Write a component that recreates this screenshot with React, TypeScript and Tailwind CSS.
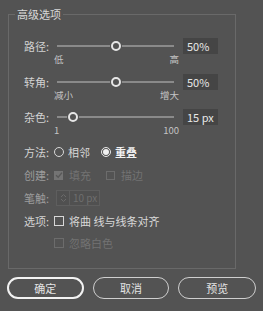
const FONT = "font-['Noto_Sans_CJK_SC','Noto_Sans',sans-serif]";

function Slider({ pct }: { pct: number }) {
  return (
    <div className="relative w-[117px] h-4 flex items-center">
      <div className="w-full h-[2px] bg-[#8a8a8a]" />
      <div
        className="absolute top-1/2 w-[12px] h-[12px] -translate-x-1/2 -translate-y-1/2 rounded-full bg-[#535353] flex items-center justify-center"
        style={{ left: `${pct}%` }}
      >
        <div className="w-[10px] h-[10px] rounded-full border-2 border-[#e6e6e6]" />
      </div>
    </div>
  );
}

function SliderBlock({ label, pct, value, lo, hi, className = '' }: { label: string; pct: number; value: string; lo: string; hi: string; className?: string }) {
  return (
    <div className={className}>
      <div className="flex items-center h-4">
        <span className="w-[33px] text-[11px] leading-4 text-[#d2d2d2]">{label}</span>
        <Slider pct={pct} />
        <div className="ml-[9px] w-[35px] h-4 bg-[#454545] text-[11px] leading-4 text-[#e8e8e8] pl-[4px]">{value}</div>
      </div>
      <div className="ml-[30px] w-[125px] h-[10px] flex justify-between text-[9.5px] leading-[10px] text-[#c4c4c4]">
        <span>{lo}</span>
        <span>{hi}</span>
      </div>
    </div>
  );
}

function CheckMark({ color }: { color: string }) {
  return (
    <svg width="8" height="8" viewBox="0 0 8 8">
      <path d="M1 4.2 L3.2 6.2 L7 1.6" fill="none" stroke={color} strokeWidth="1.4" />
    </svg>
  );
}

export default function App() {
  return (
    <div className={`w-[263px] h-[311px] bg-[#535353] pt-[8px] ${FONT}`}>
      <fieldset className="ml-2 w-[228px] h-[261px] border border-[#696969]">
        <legend className="ml-[6px] px-[2px] text-[11px] leading-[12px] text-[#d8d8d8]">高级选项</legend>
        <div className="pl-[15px] pt-[18px]">
          <SliderBlock label="路径:" pct={50} value="50%" lo="低" hi="高" />
          <SliderBlock className="mt-[10px]" label="转角:" pct={50} value="50%" lo="减小" hi="增大" />
          <SliderBlock className="mt-[9px]" label="杂色:" pct={14} value="15 px" lo="1" hi="100" />

          <div className="mt-[9px] flex items-center h-4 text-[11px] leading-4">
            <span className="w-[30px] text-[#d2d2d2]">方法:</span>
            <span className="w-[10px] h-[10px] rounded-full border border-[#d8d8d8]" />
            <span className="ml-[4px] text-[#d8d8d8]">相邻</span>
            <span className="ml-[11px] w-[10px] h-[10px] rounded-full border border-[#e8e8e8] flex items-center justify-center">
              <span className="w-[6px] h-[6px] rounded-full bg-[#f0f0f0]" />
            </span>
            <span className="ml-[4px] font-bold text-[#f2f2f2]">重叠</span>
          </div>

          <div className="mt-[7px] flex items-center h-4 text-[11px] leading-4 text-[#727272]">
            <span className="w-[30px] text-[#9c9c9c]">创建:</span>
            <span className="w-[9px] h-[9px] bg-[#747474] flex items-center justify-center">
              <CheckMark color="#585858" />
            </span>
            <span className="ml-[6px]">填充</span>
            <span className="ml-[15px] w-[9px] h-[9px] border border-[#6c6c6c]" />
            <span className="ml-[6px]">描边</span>
          </div>

          <div className="mt-[7px] flex items-center h-4 text-[11px] leading-4 text-[#6e6e6e]">
            <span className="w-[32px] text-[#9c9c9c]">笔触:</span>
            <div className="flex h-4 w-[44px] border border-[#5e5e5e] bg-[#505050]">
              <span className="w-[13px] flex flex-col items-center justify-center border-r border-[#5e5e5e]">
                <svg width="7" height="10" viewBox="0 0 7 10">
                  <path d="M1 4 L3.5 1.5 L6 4 M1 6 L3.5 8.5 L6 6" fill="none" stroke="#6a6a6a" strokeWidth="1" />
                </svg>
              </span>
              <span className="pl-[3px] text-[10px] leading-[14px]">10 px</span>
            </div>
          </div>

          <div className="mt-[7px] flex items-center h-4 text-[11px] leading-4 text-[#d8d8d8]">
            <span className="w-[30px] text-[#d2d2d2]">选项:</span>
            <span className="w-[10px] h-[10px] border border-[#d8d8d8]" />
            <span className="ml-[5px]">将曲 线与线条对齐</span>
          </div>

          <div className="mt-[6px] flex items-center h-4 text-[11px] leading-4 text-[#727272]">
            <span className="ml-[30px] w-[10px] h-[10px] border border-[#6c6c6c]" />
            <span className="ml-[5px]">忽略白色</span>
          </div>
        </div>
      </fieldset>

      <div className="mt-[8px] px-[7px] flex gap-[9px] text-[11px] text-[#e4e4e4]">
        <button className="w-[77px] h-[22px] rounded-full border-2 border-[#f2f2f2] leading-[18px]">确定</button>
        <button className="w-[77px] h-[22px] rounded-full border border-[#cfcfcf] leading-[20px]">取消</button>
        <button className="w-[78px] h-[22px] rounded-full border border-[#cfcfcf] leading-[20px]">预览</button>
      </div>
    </div>
  );
}
